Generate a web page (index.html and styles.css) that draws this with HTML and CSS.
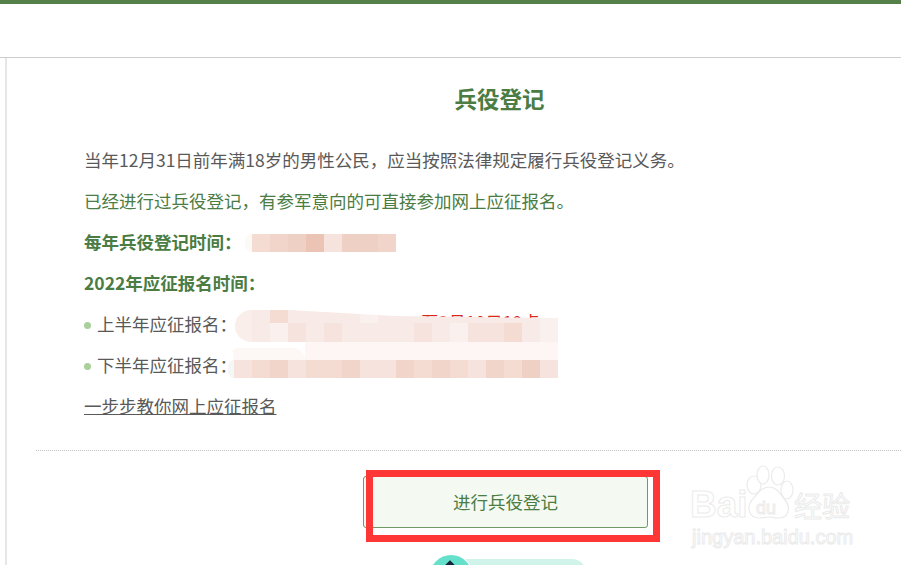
FILE: index.html
```html
<!DOCTYPE html>
<html lang="zh-CN">
<head>
<meta http-equiv="Content-Type" content="text/html; charset=utf-8">
<title>兵役登记</title>
<link rel="stylesheet" href="styles.css">
</head>
<body>
<div class="page">
<div class="top-bar"></div>
<div class="header"></div>
<div class="main">
	<div class="panel">
		<h2 class="title">兵役登记</h2>
		<div class="info">
			<p>当年12月31日前年满18岁的男性公民&#65292;应当按照法律规定履行兵役登记义务。</p>
			<p class="green">已经进行过兵役登记&#65292;有参军意向的可直接参加网上应征报名。</p>
			<p class="green bold row">每年兵役登记时间&#65306;
				<span class="mosaic mosaic-a">
					<i class="c2"></i><i class="c3"></i><i class="c4"></i><i class="c5"></i><i class="c1"></i><i class="c4"></i><i class="c4"></i><i class="c3"></i>
				</span>
			</p>
			<p class="green bold">2022年应征报名时间&#65306;</p>
			<p class="row dot">上半年应征报名&#65306;
				<span class="red-text">至2月10日10点</span>
				<span class="smear"></span>
				<span class="smear-low"></span>
				<span class="mosaic mosaic-top">
					<i class="c0"></i><i class="c2"></i><i class="c0"></i><i class="c0"></i><i class="c0"></i><i class="c0"></i><i class="c6"></i><i class="c0"></i><i class="c0"></i><i class="c0"></i><i class="c0"></i><i class="c0"></i><i class="c0"></i><i class="c0"></i><i class="c0"></i><i class="c0"></i><i class="c6"></i>
				</span>
				<span class="mosaic mosaic-b">
					<i class="c0"></i><i class="c6"></i><i class="c1"></i><i class="c0"></i><i class="c1"></i><i class="c0"></i><i class="c0"></i><i class="c0"></i><i class="c0"></i><i class="c1"></i><i class="c0"></i><i class="c6"></i><i class="c1"></i><i class="c1"></i><i class="c2"></i><i class="c0"></i><i class="c6"></i>
				</span>
			</p>
			<p class="row dot">下半年应征报名&#65306;
				<span class="mosaic mosaic-c">
					<i class="c1"></i><i class="c2"></i><i class="c3"></i><i class="c1"></i><i class="c2"></i><i class="c2"></i><i class="c3"></i><i class="c1"></i><i class="c1"></i><i class="c3"></i><i class="c2"></i><i class="c3"></i><i class="c2"></i><i class="c1"></i><i class="c3"></i><i class="c2"></i><i class="c4"></i><i class="c1"></i>
				</span>
			</p>
			<p><a class="guide" href="#">一步步教你网上应征报名</a></p>
		</div>
		<div class="actions">
			<a class="btn" href="#">进行兵役登记</a>
			<span class="red-box"></span>
		</div>
		<div class="badge"><span class="badge-icon"></span></div>
	</div>
</div>
<div class="watermark">
	<svg width="60" height="62" viewBox="0 0 60 62" class="paw">
		<g fill="#fff" stroke="#ebebeb" stroke-width="1.2">
			<ellipse cx="14" cy="21" rx="7" ry="9"/>
			<ellipse cx="23" cy="11" rx="6" ry="9"/>
			<ellipse cx="38" cy="12" rx="6.5" ry="9"/>
			<ellipse cx="47" cy="26" rx="6" ry="9"/>
			<path d="M29 23c8 0 11 7 16 13 6 7 4 18-6 18-4 0-7-1-10-1s-6 1-10 1C9 54 6 43 12 36c5-5 9-13 17-13z"/>
		</g>
	</svg>
	<div class="wm-brand">Bai</div>
	<div class="wm-du">du</div>
	<div class="wm-cn">经验</div>
	<div class="wm-url">jingyan.baidu.com</div>
</div>
</div>
</body>
</html>
```

FILE: styles.css
```css
body{
	margin: 0;
	background-color: #fff;
	font-family: "Microsoft YaHei", "Noto Sans CJK SC", sans-serif;
	color: #595959;
}
.page{
	position: relative;
	height: 565px;
	overflow: hidden;
}
.top-bar{
	height: 4px;
	background-color: #55804a;
}
.header{
	height: 53px;
	border-bottom: 1px solid #ccc;
}
.main{
	padding-left: 5px;
}
.panel{
	border-left: 2px solid #e6e6e6;
	height: 507px;
	overflow: hidden;
	padding-left: 29px;
}
.title{
	margin: 0;
	padding: 25px 0 0 62px;
	text-align: center;
	font-size: 22.5px;
	line-height: 30px;
	font-weight: bold;
	color: #4a7c43;
}
.info{
	margin-top: 26px;
	padding-left: 48px;
}
.info p{
	margin: 0;
	height: 41px;
	font-size: 17.5px;
	line-height: 41px;
	white-space: nowrap;
}
.green{
	color: #4a7c43;
}
.bold{
	font-weight: bold;
}
.row{
	position: relative;
}
.dot{
	padding-left: 13px;
}
.dot:before{
	content: "";
	position: absolute;
	left: 0;
	top: 19px;
	width: 7px;
	height: 7px;
	border-radius: 50%;
	background-color: #a9d09b;
}
.mosaic{
	position: absolute;
	display: flex;
	height: 18px;
}
.mosaic i{
	display: block;
	width: 18px;
	height: 100%;
}
.mosaic-a{
	left: 168px;
	top: 13px;
}
.mosaic-a:before{
	content: "";
	position: absolute;
	left: -7px;
	width: 7px;
	height: 100%;
	border-radius: 7px 0 0 7px;
	background-color: #fdf9f5;
}
.mosaic-top{
	left: 168px;
	top: 7px;
	height: 14px;
	clip-path: polygon(0 0, 12% 0, 47% 43%, 100% 57%, 100% 100%, 0 100%);
}
.mosaic-b{
	left: 168px;
	top: 20px;
	height: 19px;
}
.mosaic-c{
	left: 150px;
	top: 16px;
}
.mosaic-c:before{
	content: "";
	position: absolute;
	left: -6px;
	width: 6px;
	height: 100%;
	border-radius: 6px 0 0 6px;
	background-color: #f4f6f7;
}
.c0{ background-color: #f8ebe7; }
.c1{ background-color: #f6e3dd; }
.c2{ background-color: #f4dcd3; }
.c3{ background-color: #f1d5ca; }
.c4{ background-color: #efd0c5; }
.c5{ background-color: #ecc4b6; }
.c6{ background-color: #faf1ee; }
.red-text{
	position: absolute;
	left: 337px;
	top: -2px;
	color: #d8281c;
}
.smear{
	position: absolute;
	left: 151px;
	top: 7px;
	width: 60px;
	height: 32px;
	border-radius: 16px 0 0 16px;
	background-color: #f9eeea;
}
.smear-low{
	position: absolute;
	left: 221px;
	top: 39px;
	width: 253px;
	height: 18px;
	background-color: #fdf6f4;
}
.smear-low:before{
	content: "";
	position: absolute;
	left: -72px;
	top: 6px;
	width: 72px;
	height: 12px;
	border-radius: 10px 30px 0 0;
	background-color: #fdf8f6;
}
.guide{
	color: #595959;
	text-decoration: underline;
}
.actions{
	position: relative;
	margin-top: 24px;
	padding-top: 25px;
	border-top: 1px dotted #c4c4c4;
	padding-left: 327px;
}
.btn{
	display: block;
	box-sizing: border-box;
	width: 285px;
	height: 52px;
	border: 1px solid #6f9a66;
	border-radius: 3px;
	background-color: #f4f9f2;
	text-align: center;
	font-size: 17.5px;
	line-height: 50px;
	color: #4a7c43;
	text-decoration: none;
}
.red-box{
	position: absolute;
	left: 330px;
	top: 19px;
	width: 294px;
	height: 72px;
	box-sizing: border-box;
	border: 7px solid #ff3636;
}
.badge{
	position: relative;
	margin: 31px 0 0 394px;
	width: 156px;
	height: 30px;
	border-radius: 14px;
	background-color: #d0f3ea;
}
.badge-icon{
	position: absolute;
	left: 0;
	top: -4px;
	width: 42px;
	height: 42px;
	border-radius: 50%;
	background-color: #64e0cb;
	box-shadow: 0 0 0 1px #fff;
}
.badge-icon:after{
	content: "";
	position: absolute;
	left: 11px;
	top: 9px;
	width: 18px;
	height: 18px;
	background-color: #16253d;
	transform: rotate(45deg);
}
.watermark{
	position: absolute;
	left: 690px;
	top: 464px;
	width: 170px;
	height: 85px;
	color: #fff;
	-webkit-text-stroke: 1px #ebebeb;
}
.paw{
	position: absolute;
	left: 50px;
	top: 0;
}
.wm-brand{
	position: absolute;
	left: 0;
	top: 21px;
	font-family: "Liberation Sans", sans-serif;
	font-size: 37px;
	line-height: 40px;
	font-weight: bold;
}
.wm-du{
	position: absolute;
	left: 66px;
	top: 33px;
	font-family: "Liberation Sans", sans-serif;
	font-size: 18px;
	line-height: 22px;
}
.wm-cn{
	position: absolute;
	left: 104px;
	top: 24px;
	font-family: "Noto Sans CJK SC", sans-serif;
	font-size: 28px;
	line-height: 34px;
	white-space: nowrap;
}
.wm-url{
	position: absolute;
	left: 2px;
	top: 61px;
	font-family: "Liberation Sans", sans-serif;
	font-size: 20px;
	line-height: 24px;
	white-space: nowrap;
}
```
